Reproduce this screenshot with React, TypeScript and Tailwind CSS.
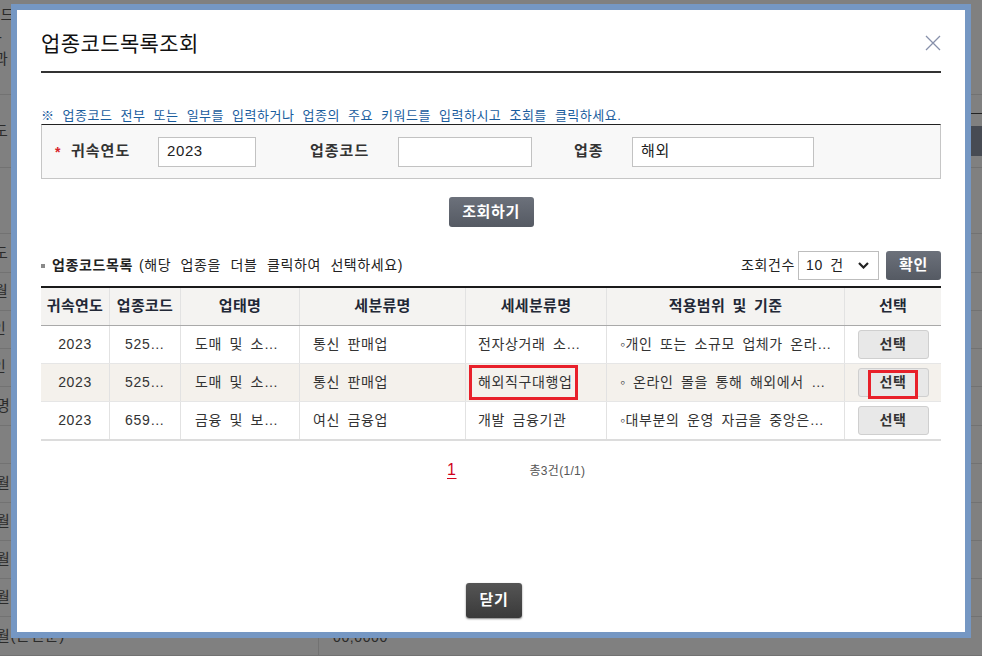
import React from "react";

const bgRows = [
  { h: 73, text: "도", tx: -6 },
  { h: 66, text: "", tx: 0 },
  { h: 39, text: "도", tx: -6 },
  { h: 38, text: "월", tx: -6 },
  { h: 38, text: "인", tx: -8 },
  { h: 38, text: "인", tx: -8 },
  { h: 39, text: "명", tx: -4 },
  { h: 38, text: "", tx: 0 },
  { h: 39, text: "월", tx: -4 },
  { h: 38, text: "월", tx: -4 },
  { h: 38, text: "월", tx: -4 },
  { h: 38, text: "월", tx: -4 },
  { h: 39, text: "월(본인분)", tx: -4 },
];

const rows = [
  {
    year: "2023",
    code: "525…",
    biz: "도매 및 소…",
    sub: "통신 판매업",
    detail: "전자상거래 소…",
    scope: "◦개인 또는 소규모 업체가 온라…",
    marked: false,
  },
  {
    year: "2023",
    code: "525…",
    biz: "도매 및 소…",
    sub: "통신 판매업",
    detail: "해외직구대행업",
    scope: "◦ 온라인 몰을 통해 해외에서 …",
    marked: true,
  },
  {
    year: "2023",
    code: "659…",
    biz: "금융 및 보…",
    sub: "여신 금융업",
    detail: "개발 금융기관",
    scope: "◦대부분의 운영 자금을 중앙은…",
    marked: false,
  },
];

const cols = "grid grid-cols-[69px_71px_119px_166px_141px_238px_96px]";

function Background() {
  return (
    <div className="flex flex-col text-[15px] text-[#2b2b2b]">
      <div className="flex h-[95px] flex-col border-b border-[#727272] pt-[4px] leading-[22px]">
        <span className="ml-[-14px]">코드</span>
        <span className="ml-[-3px]">-</span>
        <span className="ml-[-6px]">과</span>
      </div>
      {bgRows.map((r, i) => (
        <div
          key={i}
          style={{ height: r.h }}
          className="flex items-center border-b border-[#727272]"
        >
          <span style={{ marginLeft: r.tx }}>{r.text}</span>
        </div>
      ))}
      <div className="absolute right-0 top-[113px] h-[1px] w-[12px] bg-[#222]" />
      <div className="absolute right-0 top-[126px] h-[30px] w-[12px] bg-[#474b53]" />
      <div className="absolute left-[318px] top-[617px] h-[40px] w-[1px] bg-[#727272]" />
      <span className="absolute left-[333px] top-[627px] text-[14px]">
        00,0000
      </span>
    </div>
  );
}

function DarkButton({
  children,
  className,
}: {
  children: React.ReactNode;
  className: string;
}) {
  return (
    <button
      type="button"
      className={
        "flex items-center justify-center rounded-[3px] text-[15px] font-bold text-white " +
        className
      }
    >
      {children}
    </button>
  );
}

export default function App() {
  return (
    <div className="relative h-[656px] w-[982px] overflow-hidden bg-[#808080] font-['Liberation_Sans','Noto_Sans_CJK_KR',sans-serif] tracking-[0.6px] [word-spacing:3px]">
      <Background />

      <div className="absolute left-[11px] top-[4px] h-[634px] w-[960px] border-[6px] border-[#7597c3] bg-white">
        <div className="flex h-full flex-col px-[24px]">
          <div className="flex items-start justify-between border-b-2 border-[#333] pb-[13px] pt-[20px]">
            <h2 className="text-[21px] leading-[28px] tracking-[0.4px] text-[#111]">
              업종코드목록조회
            </h2>
            <svg
              width="16"
              height="16"
              viewBox="0 0 16 16"
              className="mt-[5px]"
              stroke="#8790aa"
              strokeWidth="1.3"
            >
              <path d="M1 1 L15 15 M15 1 L1 15" />
            </svg>
          </div>

          <p className="mt-[35px] text-[13px] leading-[16px] tracking-[0.5px] text-[#1a5d9e] [word-spacing:4px]">
            ※ 업종코드 전부 또는 일부를 입력하거나 업종의 주요 키워드를 입력하시고 조회를 클릭하세요.
          </p>

          <div className="flex h-[55px] items-center border border-[#c6c6c6] border-t-[#222] bg-[#f8f8f8] text-[15px] font-bold text-[#333]">
            <span className="ml-[13px] w-[16px] text-[14px] leading-none text-[#d8232a]">
              *
            </span>
            <span className="w-[87px] tracking-[1px]">귀속연도</span>
            <div className="flex h-[30px] w-[98px] items-center border border-[#c2c2c2] bg-white px-[8px] text-[15px] font-normal text-[#222]">
              2023
            </div>
            <span className="ml-[54px] w-[88px] tracking-[1px]">업종코드</span>
            <div className="h-[30px] w-[134px] border border-[#c2c2c2] bg-white" />
            <span className="ml-[42px] w-[58px] tracking-[1px]">업종</span>
            <div className="flex h-[30px] w-[182px] items-center border border-[#c2c2c2] bg-white px-[8px] text-[15px] font-normal text-[#222]">
              해외
            </div>
          </div>

          <div className="mt-[18px] flex justify-center">
            <DarkButton className="h-[30px] w-[85px] bg-gradient-to-b from-[#6c717b] to-[#555a63]">
              조회하기
            </DarkButton>
          </div>

          <div className="mt-[24px] flex h-[29px] items-center justify-between text-[14px] text-[#222]">
            <div className="flex items-center">
              <span className="mr-[7px] h-[4px] w-[4px] bg-[#8a8a8a]" />
              <span className="font-bold">업종코드목록</span>
              <span className="ml-[6px] [word-spacing:5px]">
                (해당 업종을 더블 클릭하여 선택하세요)
              </span>
            </div>
            <div className="flex items-center">
              <span className="mr-[3px]">조회건수</span>
              <div className="flex h-[29px] w-[81px] items-center justify-between border border-[#bdbdbd] bg-white pl-[7px] pr-[9px]">
                <span>10 건</span>
                <svg width="11" height="7" viewBox="0 0 11 7" fill="none" stroke="#222" strokeWidth="2.2">
                  <path d="M1 1 L5.5 5.5 L10 1" />
                </svg>
              </div>
              <DarkButton className="ml-[7px] h-[29px] w-[55px] bg-gradient-to-b from-[#6c717b] to-[#555a63]">
                확인
              </DarkButton>
            </div>
          </div>

          <div className="mt-[6px] border-t-2 border-[#1a1a1a]">
            <div
              className={
                cols +
                " h-[38px] border-b border-[#a9a9a9] bg-[#f4f3f1] text-[15px] font-bold tracking-[0.3px] text-[#222836]"
              }
            >
              {["귀속연도", "업종코드", "업태명", "세분류명", "세세분류명", "적용범위 및 기준", "선택"].map(
                (h, i) => (
                  <div
                    key={h}
                    className={
                      "flex items-center justify-center " +
                      (i < 6 ? "border-r border-[#e2e2e2]" : "")
                    }
                  >
                    {h}
                  </div>
                )
              )}
            </div>
            {rows.map((r, i) => (
              <div
                key={i}
                className={
                  cols +
                  " text-[14px] text-[#333] " +
                  (i === 1 ? "bg-[#f4f1ec] " : "bg-white ") +
                  (i === rows.length - 1
                    ? "h-[39px] border-b-2 border-[#dcdcdc]"
                    : "h-[38px] border-b border-[#e6e6e6]")
                }
              >
                <div className="flex items-center justify-center border-r border-[#e2e2e2]">
                  {r.year}
                </div>
                <div className="flex items-center justify-center border-r border-[#e2e2e2]">
                  {r.code}
                </div>
                <div className="flex items-center border-r border-[#e2e2e2] pl-[14px]">
                  {r.biz}
                </div>
                <div className="flex items-center border-r border-[#e2e2e2] pl-[13px]">
                  {r.sub}
                </div>
                <div className="flex items-center border-r border-[#e2e2e2] pl-[12px]">
                  <span className="relative">
                    {r.detail}
                    {r.marked && (
                      <span className="absolute -bottom-[7px] -left-[9px] -right-[6px] -top-[7px] border-[3px] border-[#e8202a]" />
                    )}
                  </span>
                </div>
                <div className="flex items-center border-r border-[#e2e2e2] pl-[13px]">
                  {r.scope}
                </div>
                <div className="flex items-center justify-center">
                  <button
                    type="button"
                    className="relative flex h-[29px] w-[71px] items-center justify-center rounded-[3px] border border-[#cfcfcf] bg-[#e8e8e8] text-[14px] font-bold text-[#333]"
                  >
                    선택
                    {r.marked && (
                      <span className="absolute bottom-[-3px] left-[9px] right-[10px] top-[1px] border-[3px] border-[#e8202a]" />
                    )}
                  </button>
                </div>
              </div>
            ))}
          </div>

          <div className="mt-[20px] flex items-baseline pl-[406px] leading-[18px]">
            <span className="text-[16px] text-[#d0021b] underline underline-offset-[3px]">
              1
            </span>
            <span className="ml-[73px] text-[12px] tracking-[0.3px] text-[#555]">
              총3건(1/1)
            </span>
          </div>

          <div className="mb-[14px] mt-auto flex justify-center pl-[6px]">
            <DarkButton className="h-[35px] w-[56px] bg-gradient-to-b from-[#555] to-[#3a3a3a] shadow-[0_1px_2px_rgba(0,0,0,0.5)]">
              닫기
            </DarkButton>
          </div>
        </div>
      </div>
    </div>
  );
}
